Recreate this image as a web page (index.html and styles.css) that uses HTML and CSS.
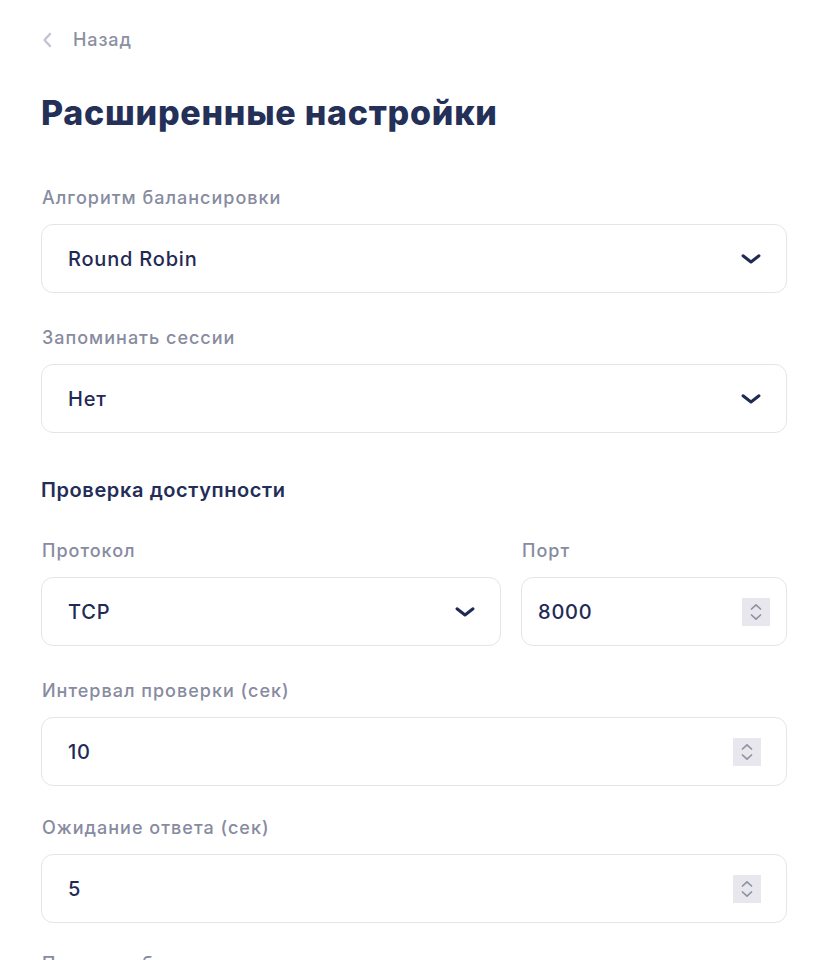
FILE: index.html
```html
<!DOCTYPE html>
<html lang="ru">
<head>
<meta charset="utf-8">
<title>Расширенные настройки</title>
<link rel="stylesheet" href="styles.css">
</head>
<body>
<main class="page">
  <a class="back" href="#">
    <svg class="back-icon" width="10" height="16" viewBox="0 0 10 16"><path d="M8 2 L2.5 8 L8 14" fill="none" stroke="currentColor" stroke-width="2.4" stroke-linecap="round" stroke-linejoin="round"/></svg>
    <span>Назад</span>
  </a>
  <h1 class="title">Расширенные настройки</h1>

  <div class="field first">
    <div class="label">Алгоритм балансировки</div>
    <div class="control">
      <span class="value">Round Robin</span>
      <svg class="chev" width="20" height="10" viewBox="0 0 20 10"><path d="M2 1.8 L10 8 L18 1.8" fill="none" stroke="currentColor" stroke-width="3" stroke-linecap="round" stroke-linejoin="round"/></svg>
    </div>
  </div>

  <div class="field">
    <div class="label">Запоминать сессии</div>
    <div class="control">
      <span class="value">Нет</span>
      <svg class="chev" width="20" height="10" viewBox="0 0 20 10"><path d="M2 1.8 L10 8 L18 1.8" fill="none" stroke="currentColor" stroke-width="3" stroke-linecap="round" stroke-linejoin="round"/></svg>
    </div>
  </div>

  <h2 class="section">Проверка доступности</h2>

  <div class="row">
    <div class="field">
      <div class="label">Протокол</div>
      <div class="control">
        <span class="value">TCP</span>
        <svg class="chev" width="20" height="10" viewBox="0 0 20 10"><path d="M2 1.8 L10 8 L18 1.8" fill="none" stroke="currentColor" stroke-width="3" stroke-linecap="round" stroke-linejoin="round"/></svg>
      </div>
    </div>
    <div class="field">
      <div class="label">Порт</div>
      <div class="control number tight">
        <span class="value">8000</span>
        <span class="spin"><svg width="14" height="24" viewBox="0 0 14 24"><path d="M2.5 9 L7 4.8 L11.5 9 M2.5 15 L7 19.2 L11.5 15" fill="none" stroke="currentColor" stroke-width="1.7" stroke-linecap="round" stroke-linejoin="round"/></svg></span>
      </div>
    </div>
  </div>

  <div class="field">
    <div class="label">Интервал проверки (сек)</div>
    <div class="control number">
      <span class="value">10</span>
      <span class="spin"><svg width="14" height="24" viewBox="0 0 14 24"><path d="M2.5 9 L7 4.8 L11.5 9 M2.5 15 L7 19.2 L11.5 15" fill="none" stroke="currentColor" stroke-width="1.7" stroke-linecap="round" stroke-linejoin="round"/></svg></span>
    </div>
  </div>

  <div class="field closer">
    <div class="label">Ожидание ответа (сек)</div>
    <div class="control number">
      <span class="value">5</span>
      <span class="spin"><svg width="14" height="24" viewBox="0 0 14 24"><path d="M2.5 9 L7 4.8 L11.5 9 M2.5 15 L7 19.2 L11.5 15" fill="none" stroke="currentColor" stroke-width="1.7" stroke-linecap="round" stroke-linejoin="round"/></svg></span>
    </div>
  </div>

  <div class="field last">
    <div class="label">Порог срабатывания</div>
    <div class="control number">
      <span class="value">3</span>
    </div>
  </div>
</main>
</body>
</html>
```

FILE: styles.css
```css
* { box-sizing: border-box; }
html, body { margin: 0; padding: 0; background: #ffffff; }
body {
  font-family: Inter, "Noto Sans", "Liberation Sans", sans-serif;
  color: #232d58;
}
.page {
  width: 787px;
  padding: 27px 0 40px 41px;
}
.back {
  display: flex;
  align-items: center;
  gap: 21px;
  text-decoration: none;
  color: #8a8fa2;
  font-size: 18px;
  font-weight: 500;
  line-height: 26px;
  letter-spacing: 0.9px;
  padding-left: 1px;
}
.back-icon { color: #c2c5cf; }
.title {
  margin: 38px 0 0;
  font-size: 34px;
  font-weight: 800;
  line-height: 44px;
  letter-spacing: 0.75px;
  color: #243058;
}
.field { margin-top: 33px; }
.field.first { margin-top: 51px; }
.field.closer { margin-top: 30px; }
.field.last { margin-top: 29px; }
.label {
  font-size: 18px;
  font-weight: 500;
  line-height: 24px;
  letter-spacing: 1px;
  color: #878b9f;
  margin-bottom: 14px;
  padding-left: 1px;
}
.control {
  height: 69px;
  border: 1px solid #e4e5ec;
  border-radius: 12px;
  display: flex;
  align-items: center;
  justify-content: space-between;
  padding: 0 25px 0 26px;
}
.value {
  font-size: 20px;
  font-weight: 500;
  letter-spacing: 0.8px;
  color: #1f2a55;
}
.chev { color: #1f2a55; }
.number { padding-right: 25px; }
.number.tight { padding: 0 16px 0 16px; }
.spin {
  width: 28px;
  height: 28px;
  background: #e7e7ed;
  color: #8e92a3;
  display: flex;
  align-items: center;
  justify-content: center;
}
.section {
  margin: 43px 0 0;
  font-size: 20px;
  font-weight: 600;
  line-height: 28px;
  letter-spacing: 0.6px;
  color: #232d58;
}
.row {
  display: grid;
  grid-template-columns: 1fr 266px;
  gap: 20px;
  margin-top: 35px;
}
.row .field { margin-top: 0; }
```
